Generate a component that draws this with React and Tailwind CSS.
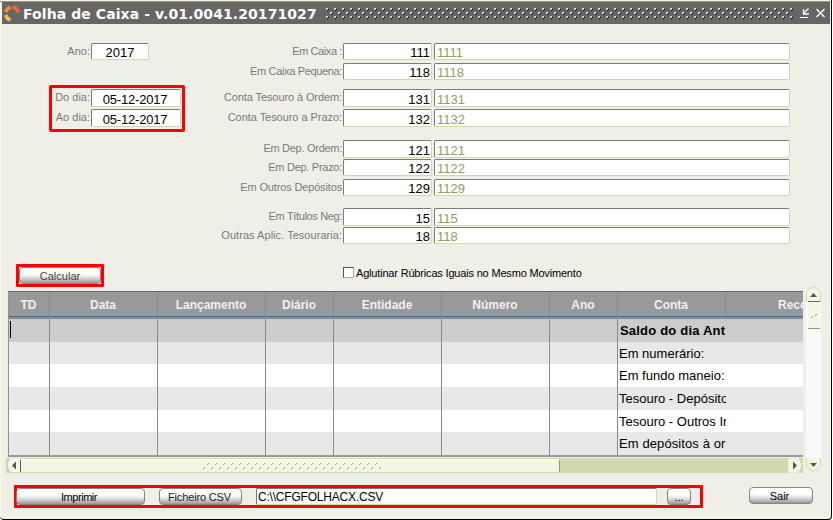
import React from "react";

const accounts = [
  { label: "Em Caixa :", code: "111", name: "1111", box: "h-[17px] leading-[17px]", gap: "", track: "tracking-[-0.4px]" },
  { label: "Em Caixa Pequena:", code: "118", name: "1118", box: "h-[17px] leading-[17px]", gap: "mt-[3px]", track: "tracking-[-0.35px]" },
  { label: "Conta Tesouro à Ordem:", code: "131", name: "1131", box: "h-[18px] leading-[19px]", gap: "mt-[9px]", track: "tracking-[-0.1px]" },
  { label: "Conta Tesouro a Prazo:", code: "132", name: "1132", box: "h-[18px] leading-[19px]", gap: "mt-[2px]", track: "tracking-[-0.05px]" },
  { label: "Em Dep. Ordem:", code: "121", name: "1121", box: "h-[18px] leading-[19px]", gap: "mt-[13px]", track: "tracking-[-0.28px]" },
  { label: "Em Dep. Prazo:", code: "122", name: "1122", box: "h-[17px] leading-[17px]", gap: "mt-[1px]", track: "tracking-[-0.28px]" },
  { label: "Em Outros Depósitos", code: "129", name: "1129", box: "h-[17px] leading-[17px]", gap: "mt-[3px]", track: "tracking-[-0.15px]" },
  { label: "Em Títulos Neg:", code: "15", name: "115", box: "h-[18px] leading-[19px]", gap: "mt-[12px]", track: "tracking-[-0.35px]" },
  { label: "Outras Aplic. Tesouraria:", code: "18", name: "118", box: "h-[17px] leading-[17px]", gap: "mt-[1px]", track: "tracking-[0.04px]" },
];

const columns = [
  { title: "TD", w: "w-[41px]" },
  { title: "Data", w: "w-[108px]" },
  { title: "Lançamento", w: "w-[108px]" },
  { title: "Diário", w: "w-[68px]" },
  { title: "Entidade", w: "w-[108px]" },
  { title: "Número", w: "w-[108px]" },
  { title: "Ano", w: "w-[68px]" },
  { title: "Conta", w: "w-[108px]" },
];

const rows = [
  { text: "Saldo do dia Ant", style: "h-[23px] bg-[#cccccc] font-bold tracking-[0.2px]", pad: "pl-[2px]" },
  { text: "Em numerário:", style: "h-[22px] bg-[#e8e8e8]", pad: "pl-[1px]" },
  { text: "Em fundo maneio:", style: "h-[23px] bg-white", pad: "pl-[1px]" },
  { text: "Tesouro - Depósitos", style: "h-[23px] bg-[#e8e8e8]", pad: "pl-[1px]" },
  { text: "Tesouro - Outros Ins", style: "h-[22px] bg-white", pad: "pl-[1px]" },
  { text: "Em depósitos à or", style: "h-[23px] bg-[#e8e8e8] tracking-[0.1px]", pad: "pl-[1px]" },
];

function Field({ className, children }) {
  return (
    <div className={`shrink-0 overflow-hidden rounded-[2px] border border-t-[#7b7b7b] border-l-[#7b7b7b] border-r-[#d2d8ae] border-b-[#d2d8ae] bg-white ${className}`}>
      {children}
    </div>
  );
}

function Button({ className, children }) {
  return (
    <button className={`shrink-0 rounded-[4px] border border-[#858585] bg-linear-to-b from-[#ffffff] from-40% via-[#dddddd] via-65% to-[#999999] text-center text-[11px] leading-[17px] ${className}`}>
      {children}
    </button>
  );
}

function TitleBar() {
  return (
    <div className="flex h-[22px] shrink-0 items-start bg-[#666666] text-white">
      <svg className="ml-[1px] mt-[2px] shrink-0" width="18" height="18" viewBox="0 0 18 18" fill="none">
        <path d="M9.500 3A6.500 6.500 0 0 1 15 8.500" stroke="#e8673a" strokeWidth="4" />
        <path d="M2.800 8A6.500 6.500 0 0 1 7.500 3.200" stroke="#f08a3c" strokeWidth="3.500" />
        <path d="M2.800 11A6.500 6.500 0 0 0 7.500 15.800" stroke="#f3c04c" strokeWidth="3.500" />
      </svg>
      <div className="ml-[1px] w-[304px] shrink-0 whitespace-nowrap pl-[1px] font-['DejaVu_Sans'] text-[14px] font-bold leading-[24px] tracking-[0.08px]">
        Folha de Caixa - v.01.0041.20171027
      </div>
      <svg className="mt-[6px] shrink-0" width="467" height="11" shapeRendering="crispEdges">
        <defs>
          <pattern id="grip" width="8" height="8" patternUnits="userSpaceOnUse">
            <path d="M0 0h2v1H1v1H0zM4 4h2v1H5v1H4z" fill="#dde0bd" />
            <path d="M1 1h1v1H1zM5 5h1v1H5z" fill="#b5b890" />
            <path d="M2 1h1v1H2zM1 2h1v1H1zM6 5h1v1H6zM5 6h1v1H5z" fill="#000" />
          </pattern>
        </defs>
        <rect width="467" height="11" fill="url(#grip)" />
      </svg>
      <svg className="ml-[6px] mt-[5px] shrink-0" width="30" height="13" stroke="#fff" fill="none">
        <path d="M1 10.500h8" />
        <path d="M9.500 1.500l-5 5M4.500 2v5H10" strokeWidth="1.300" />
        <path d="M17.500 2l8 8M25.500 2l-8 8" strokeWidth="1.400" />
      </svg>
    </div>
  );
}

function Form() {
  return (
    <div className="flex h-[221px] shrink-0 pt-[19px] text-[11px] text-[#7a7a7a]">
      <div className="flex w-[210px] flex-col">
        <div className="flex">
          <div className="w-[88px] text-right leading-[16px]">Ano:</div>
          <Field className="ml-[1px] h-[17px] w-[58px] text-center text-[13px] leading-[17px] text-black">2017</Field>
        </div>
        <div className="ml-[47px] mt-[25px] flex h-[47px] w-[136px] flex-col rounded-[2px] border-[3px] border-[#ff0000] pt-[1px]">
          {["Do dia:", "Ao dia:"].map((label) => (
            <div key={label} className="mb-[2px] flex">
              <div className="w-[38px] whitespace-nowrap text-right leading-[17px]">{label}</div>
              <Field className="ml-[1px] h-[18px] w-[90px] pr-[2px] text-center text-[13px] leading-[20px] tracking-[-0.2px] text-black">05-12-2017</Field>
            </div>
          ))}
        </div>
      </div>
      <div className="flex flex-col">
        {accounts.map((a) => (
          <div key={a.label} className={`flex ${a.gap}`}>
            <div className={`w-[130px] whitespace-nowrap text-right leading-[16px] ${a.track}`}>{a.label}</div>
            <Field className={`ml-[1px] w-[89px] pr-px text-right text-[13px] text-black ${a.box}`}>{a.code}</Field>
            <Field className={`ml-[2px] w-[356px] pl-[2px] text-[13px] text-[#999966] ${a.box}`}>{a.name}</Field>
          </div>
        ))}
      </div>
    </div>
  );
}

function Table() {
  return (
    <div className="w-[795px] shrink-0 overflow-hidden border-l border-[#8a8f98]">
      <div className="flex h-[26px] border-y border-[#44739f] bg-[#999999] text-[12px] font-bold leading-[26px] text-[#f0f0f0]">
        {columns.map((c) => (
          <div key={c.title} className={`shrink-0 border-r border-[#858a98] pr-[1px] text-center ${c.w}`}>{c.title}</div>
        ))}
        <div className="w-[77px] shrink-0 overflow-hidden pl-[52px]">Receita</div>
      </div>
      <div className="h-[2px] bg-[#8c8c8c]" />
      {rows.map((r, i) => (
        <div key={r.text} className={`flex ${r.style}`}>
          {columns.slice(0, 7).map((c) => (
            <div key={c.title} className={`shrink-0 border-r border-[#858a94] ${c.w}`}>
              {i === 0 && c.title === "TD" && <div className="ml-[1px] mt-[2px] h-[17px] w-px bg-black" />}
            </div>
          ))}
          <div className={`w-[108px] shrink-0 overflow-hidden whitespace-nowrap text-[13px] leading-[23px] text-black ${r.pad}`}>{r.text}</div>
        </div>
      ))}
      <div className="h-[2px] bg-[#999999]" />
    </div>
  );
}

function VerticalScroll() {
  return (
    <svg className="ml-[3px] -mt-[4px] shrink-0" width="15" height="187" fill="none">
      <rect x="0" y="14" width="15" height="160" fill="#fafafa" />
      <path d="M.5 15V6Q2 1 7.5 .5Q13 1 14.5 6V15" fill="#f5f5e3" stroke="#d2d8ae" />
      <path d="M4 10h7L7.5 6z" fill="#555" />
      <path d="M2 14.5h12" stroke="#666" />
      <path d="M2 15h12v26H2z" fill="#f5f5e3" />
      <path d="M2 41.5h12" stroke="#999966" />
      <path d="M5 31l2-2M9 29l2-2" stroke="#999966" />
      <path d="M.5 171v7Q2 183 7.500 184Q13 183 14.5 178v-7" fill="#f5f5e3" stroke="#d2d8ae" />
      <path d="M4 176h7l-3.500 4z" fill="#555" />
    </svg>
  );
}

function HorizontalScroll() {
  return (
    <svg className="ml-[4px] shrink-0" width="797" height="15" fill="none">
      <defs>
        <pattern id="hatch" width="8" height="8" patternUnits="userSpaceOnUse">
          <path d="M5 3l2-2M1 7l2-2" stroke="#999966" />
          <path d="M4 2l2-2M0 6l2-2" stroke="#fff" />
        </pattern>
      </defs>
      <rect width="797" height="15" fill="#d2d8ae" />
      <path d="M14 1H5Q0 7 5 13.500H14z" fill="#f5f5e3" stroke="#fff" />
      <rect x="15" y="1" width="538" height="13" fill="#f5f5e3" />
      <path d="M15 1.500h538" stroke="#fff" />
      <path d="M14.500 2v12" stroke="#555" />
      <path d="M6 7.500l4-4v8z" fill="#555" />
      <g transform="translate(196 4)"><rect width="180" height="8" fill="url(#hatch)" /></g>
      <path d="M553.500 2v12" stroke="#999966" />
      <path d="M783 1h9Q797 7 792 14H783z" fill="#f5f5e3" stroke="#fff" />
      <path d="M791 7.500l-4-4v8z" fill="#555" />
    </svg>
  );
}

export default function App() {
  return (
    <div className="h-[520px] w-[833px] overflow-hidden bg-white font-['Liberation_Sans',sans-serif]">
      <div className="flex h-[520px] w-[832px] flex-col rounded-b-[4px] border-b border-r border-black bg-[#f5f5e3]">
        <div className="h-[2px] shrink-0 border-b border-[#999966] bg-[#f5f5e3]" />
        <div className="ml-[2px] mr-[1px] flex h-[515px] flex-col bg-[#efefe8]">
          <TitleBar />
          <Form />
          <div className="flex h-[42px] shrink-0 items-start pt-[19px]">
            <div className="ml-[14px] flex h-[23px] w-[88px] rounded-[1px] border-[3px] border-[#ff0000]">
              <Button className="h-[17px] w-[82px] text-[#444]">Calcular</Button>
            </div>
            <div className="ml-[239px] mt-[3px] h-[11px] w-[11px] border border-t-[#555] border-l-[#555] border-r-[#aaa] border-b-[#aaa] bg-white" />
            <div className="ml-[2px] mt-[1px] text-[11px] leading-[17px] tracking-[-0.18px] text-black">Aglutinar Rúbricas Iguais no Mesmo Movimento</div>
          </div>
          <div className="ml-[6px] mt-[4px] flex h-[166px] shrink-0">
            <Table />
            <VerticalScroll />
          </div>
          <div className="mt-[1px] flex">
            <HorizontalScroll />
          </div>
          <div className="mt-[12px] flex">
            <div className="ml-[12px] flex h-[23px] w-[689px] shrink-0 rounded-[1px] border-[3px] border-[#ff0000]">
              <Button className="-ml-px h-[17px] w-[129px] pr-[3px] tracking-[-0.45px] text-black">Imprimir</Button>
              <Button className="ml-[14px] h-[17px] w-[83px] pr-[2px] tracking-[-0.15px] text-[#222]">Ficheiro CSV</Button>
              <Field className="ml-[14px] h-[17px] w-[401px] pl-[1px] text-[12px] leading-[17px] tracking-[-0.2px] text-black">C:\\CFGFOLHACX.CSV</Field>
              <Button className="ml-[10px] h-[17px] w-[24px] text-black">...</Button>
            </div>
            <Button className="ml-[46px] mt-[2px] h-[17px] w-[64px] pr-[3px] text-black">Sair</Button>
          </div>
        </div>
      </div>
    </div>
  );
}
